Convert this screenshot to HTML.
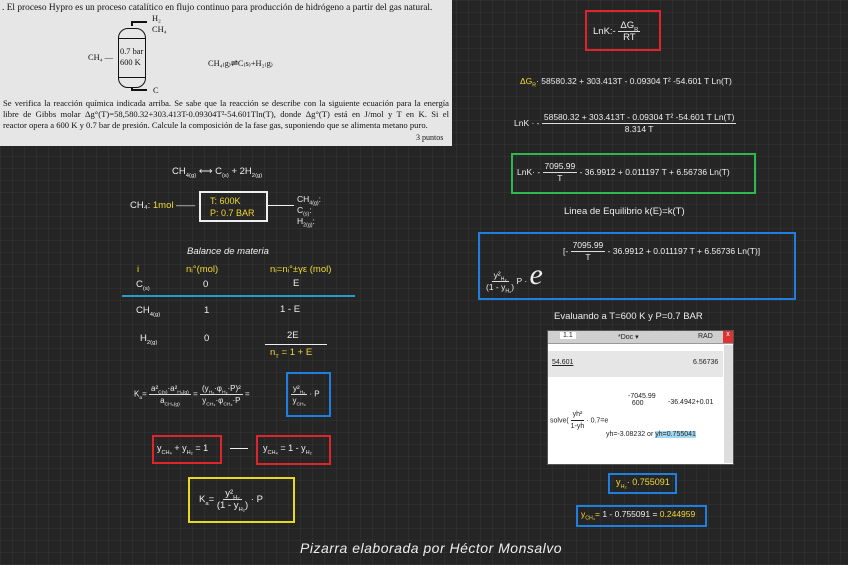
<!DOCTYPE html>
<html><head><meta charset="utf-8"><style>
*{margin:0;padding:0;box-sizing:border-box}
body{width:848px;height:565px;overflow:hidden;background:#252525;position:relative;font-family:"Liberation Sans",sans-serif;color:#eee;
background-image:linear-gradient(rgba(255,255,255,0.035) 1px,transparent 1px),linear-gradient(90deg,rgba(255,255,255,0.035) 1px,transparent 1px);background-size:12px 12px}
.a{position:absolute;white-space:nowrap}
sub,sup{font-size:0.62em;line-height:0}
.y{color:#f2d930}
.s{font-size:9.5px}
.paper{position:absolute;left:0;top:0;width:452px;height:146px;background:#e6e6e6;color:#111;font-family:"Liberation Serif",serif;font-size:8.4px;overflow:hidden}
.box{position:absolute;border:2px solid}
.frac{display:inline-flex;flex-direction:column;align-items:center;vertical-align:middle;line-height:11px}
.frac span:first-child{border-bottom:1px solid #ddd;padding:0 2px}
.just{position:absolute;left:3px;width:446px;text-align:justify;text-align-last:justify;white-space:nowrap;font-size:8.6px}
</style></head><body>
<div class="paper">
<div class="a" style="left:2px;top:3px;font-size:9.4px">. El proceso Hypro es un proceso catalítico en flujo continuo para producción de hidrógeno a partir del gas natural.</div>
<div class="a" style="left:152px;top:14px">H₂</div>
<div class="a" style="left:152px;top:25px">CH₄</div>
<div class="a" style="left:131px;top:21px;width:16px;height:5px;border-top:2px solid #111;border-left:2px solid #111"></div>
<div class="a" style="left:118px;top:28px;width:28px;height:60px;border:1px solid #111;border-radius:10px"></div>
<div class="a" style="left:118px;top:38px;width:28px;height:40px;border-top:1px solid #111;border-bottom:1px solid #111"></div>
<div class="a" style="left:120px;top:47px">0.7 bar</div>
<div class="a" style="left:120px;top:58px">600 K</div>
<div class="a" style="left:88px;top:53px">CH₄ —</div>
<div class="a" style="left:131px;top:88px;width:16px;height:3px;border-bottom:2px solid #111;border-left:2px solid #111"></div>
<div class="a" style="left:153px;top:86px">C</div>
<div class="a" style="left:208px;top:58px">CH₄₍g₎⇌C₍s₎+H₂₍g₎</div>
<div class="just" style="top:98px">Se verifica la reacción química indicada arriba. Se sabe que la reacción se describe con la siguiente ecuación para la energía</div>
<div class="just" style="top:109px">libre de Gibbs molar Δg°(T)=58,580.32+303.413T-0.09304T²-54.601Tln(T), donde Δg°(T) está en J/mol y T en K. Si el</div>
<div class="a" style="left:3px;top:120px;font-size:8.6px">reactor opera a 600 K y 0.7 bar de presión. Calcule la composición de la fase gas, suponiendo que se alimenta metano puro.</div>
<div class="a" style="left:416px;top:133px;font-size:8px">3 puntos</div>
</div>

<div class="box" style="left:585px;top:10px;width:76px;height:41px;border-color:#e0242e"></div>
<div class="a s" style="left:593px;top:20px">LnK:- <span class="frac"><span>ΔG<sub>R</sub></span><span>RT</span></span></div>
<div class="a" style="left:520px;top:76px;font-size:8.5px"><span class="y">ΔG<sub>R</sub></span>· 58580.32 + 303.413T - 0.09304 T² -54.601 T Ln(T)</div>
<div class="a" style="left:514px;top:112px;font-size:8.5px">LnK · - <span class="frac"><span>58580.32 + 303.413T - 0.09304 T² -54.601 T Ln(T)</span><span>8.314 T</span></span></div>
<div class="box" style="left:511px;top:153px;width:245px;height:41px;border-color:#2fb84c"></div>
<div class="a" style="left:517px;top:161px;font-size:8.5px">LnK· - <span class="frac"><span>7095.99</span><span>T</span></span> - 36.9912 + 0.011197 T + 6.56736 Ln(T)</div>
<div class="a s" style="left:564px;top:206px">Linea de Equilibrio k(E)=k(T)</div>
<div class="box" style="left:478px;top:232px;width:318px;height:68px;border-color:#1f7fe0"></div>
<div class="a" style="left:486px;top:258px;font-size:8.5px"><span class="frac"><span>y²<sub>H₂</sub></span><span>(1 - y<sub>H₂</sub>)</span></span> P · <span style="font-size:30px;font-family:'Liberation Serif',serif;font-style:italic">e</span></div>
<div class="a" style="left:563px;top:240px;font-size:8.5px">[- <span class="frac"><span>7095.99</span><span>T</span></span> - 36.9912 + 0.011197 T + 6.56736 Ln(T)]</div>
<div class="a s" style="left:554px;top:311px">Evaluando a T=600 K y P=0.7 BAR</div>
<div class="a" style="left:547px;top:330px;width:187px;height:135px;background:#fff;border:1px solid #555;color:#222;font-size:7px;overflow:hidden">
 <div style="height:13px;background:#cfcfcf;border-bottom:1px solid #999;position:relative"><span class="a" style="left:12px;top:1px;background:#fff;padding:0 3px">1.1</span><span class="a" style="left:70px;top:2px">*Doc ▾</span><span class="a" style="left:150px;top:2px">RAD</span><span class="a" style="left:175px;top:0;width:10px;height:12px;background:#d33;color:#fff;text-align:center">x</span></div>
 <div style="position:absolute;left:0;top:20px;width:175px;height:26px;background:#e6e6e6"></div>
 <div class="a" style="left:4px;top:28px;text-decoration:underline">54.601</div>
 <div class="a" style="left:145px;top:28px">6.56736</div>
 <div class="a" style="left:2px;top:78px">solve( <span class="frac"><span style="border-color:#222">yh²</span><span>1-yh</span></span> · 0.7=e</div>
 <div class="a" style="left:80px;top:62px">-7045.99<br>&nbsp;&nbsp;600</div>
 <div class="a" style="left:120px;top:68px">-36.4942+0.01</div>
 <div class="a" style="left:58px;top:100px">yh=-3.08232 or <span style="background:#9fd8f0">yh=0.755041</span></div>
 <div class="a" style="left:176px;top:14px;width:9px;height:118px;background:#ddd"></div>
</div>
<div class="box" style="left:608px;top:473px;width:69px;height:21px;border-color:#1f7fe0"></div>
<div class="a y" style="left:616px;top:477px;font-size:9px">y<sub>H₂</sub>· 0.755091</div>
<div class="box" style="left:576px;top:505px;width:131px;height:22px;border-color:#1f7fe0"></div>
<div class="a" style="left:581px;top:509px;font-size:8.5px"><span class="y">y<sub>CH₄</sub>=</span> 1 - 0.755091 = <span class="y">0.244959</span></div>
<div class="a" style="left:300px;top:540px;font-size:14px;font-style:italic;letter-spacing:0.5px">Pizarra elaborada por Héctor Monsalvo</div>

<div class="a s" style="left:172px;top:166px">CH<sub>4(g)</sub> ⟷ C<sub>(s)</sub> + 2H<sub>2(g)</sub></div>
<div class="a s" style="left:130px;top:200px">CH₄: <span class="y">1mol</span> ——</div>
<div class="a" style="left:199px;top:191px;width:69px;height:31px;border:2px solid #eee"></div>
<div class="a y" style="left:210px;top:195px;font-size:9px;line-height:12px">T: 600K<br>P: 0.7 BAR</div>
<div class="a" style="left:268px;top:205px;width:26px;border-top:1px solid #eee"></div>
<div class="a" style="left:297px;top:194px;font-size:8.5px;line-height:11px">CH<sub>4(g)</sub>:<br>C<sub>(s)</sub>:<br>H<sub>2(g)</sub>:</div>
<div class="a s" style="left:187px;top:246px;font-style:italic">Balance de materia</div>
<div class="a y s" style="left:137px;top:264px">i</div>
<div class="a y s" style="left:186px;top:264px">nᵢ°(mol)</div>
<div class="a y s" style="left:270px;top:264px">nᵢ=nᵢ°±γε (mol)</div>
<div class="a s" style="left:136px;top:279px">C<sub>(s)</sub></div>
<div class="a s" style="left:203px;top:279px">0</div>
<div class="a s" style="left:293px;top:278px">E</div>
<div class="a" style="left:122px;top:295px;width:233px;border-top:2px solid #2a9bc8"></div>
<div class="a s" style="left:136px;top:305px">CH<sub>4(g)</sub></div>
<div class="a s" style="left:204px;top:305px">1</div>
<div class="a s" style="left:280px;top:304px">1 - E</div>
<div class="a s" style="left:140px;top:333px">H<sub>2(g)</sub></div>
<div class="a s" style="left:204px;top:333px">0</div>
<div class="a s" style="left:287px;top:330px">2E</div>
<div class="a" style="left:265px;top:344px;width:62px;border-top:1px solid #eee"></div>
<div class="a y s" style="left:270px;top:347px">n<sub>T</sub> = 1 + E</div>
<div class="a" style="left:134px;top:383px;font-size:8px">K<sub>a</sub>= <span class="frac"><span>a²<sub>C(s)</sub>·a²<sub>H₂(g)</sub></span><span>a<sub>CH₄(g)</sub></span></span> = <span class="frac"><span>(y<sub>H₂</sub>·φ<sub>H₂</sub>·P)²</span><span>y<sub>CH₄</sub>·φ<sub>CH₄</sub>·P</span></span> =</div>
<div class="box" style="left:286px;top:372px;width:45px;height:45px;border-color:#1f7fe0"></div>
<div class="a" style="left:291px;top:383px;font-size:8px"><span class="frac"><span>y²<sub>H₂</sub></span><span>y<sub>CH₄</sub></span></span> · P</div>
<div class="box" style="left:152px;top:435px;width:70px;height:29px;border-color:#e0242e"></div>
<div class="a" style="left:157px;top:443px;font-size:9px">y<sub>CH₄</sub> + y<sub>H₂</sub> = 1</div>
<div class="a" style="left:230px;top:448px;width:18px;border-top:1px solid #eee"></div>
<div class="box" style="left:256px;top:435px;width:75px;height:30px;border-color:#e0242e"></div>
<div class="a" style="left:263px;top:443px;font-size:9px">y<sub>CH₄</sub> = 1 - y<sub>H₂</sub></div>
<div class="box" style="left:188px;top:477px;width:107px;height:46px;border-color:#e8d820"></div>
<div class="a s" style="left:199px;top:488px">K<sub>a</sub>= <span class="frac"><span>y²<sub>H₂</sub></span><span>(1 - y<sub>H₂</sub>)</span></span> · P</div>
</body></html>
